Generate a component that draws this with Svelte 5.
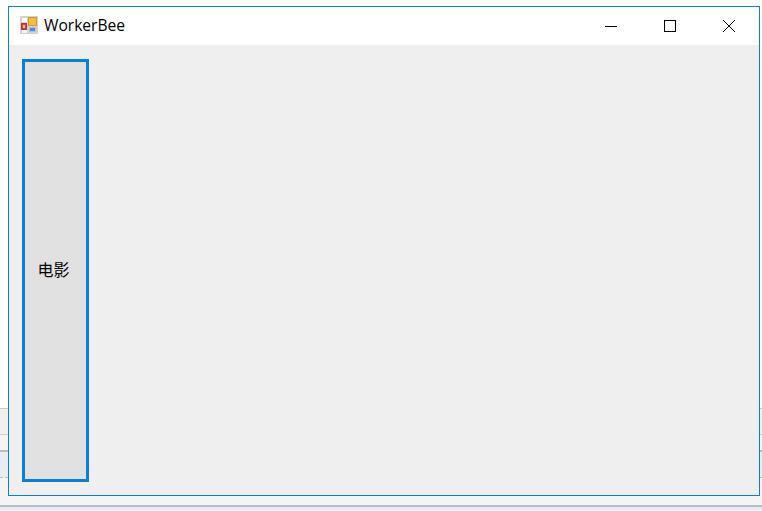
<script>
  const stripes = ['s1', 's2', 's3', 's4', 's5', 's6'];
</script>

<div class="screen">
  <div class="backdrop">
    <div class="gutter">
      {#each stripes as s}
        <div class={s}></div>
      {/each}
    </div>
  </div>
  <div class="window">
    <header class="titlebar">
      <svg class="appicon" width="18" height="18" viewBox="0 0 18 18">
        <rect width="18" height="18" fill="#d2d2d2" />
        <rect x="2" y="2" width="5" height="4" fill="#fff" />
        <rect x="2" y="13" width="5" height="4" fill="#f6f6f6" />
        <rect x="8.5" y="1.5" width="8" height="8" fill="#f5bd3c" stroke="#d59a22" />
        <rect x="1.5" y="7.5" width="5" height="6" fill="#d8423a" stroke="#a83a34" />
        <rect x="3" y="9" width="2" height="3" fill="#efb8a8" />
        <rect x="9.5" y="11.5" width="6" height="4" fill="#4f8ae0" stroke="#a4c2ea" />
      </svg>
      <span class="title">WorkerBee</span>
      <div class="controls">
        <button class="ctl" aria-label="Minimize">
          <svg width="14" height="14" viewBox="0 0 14 14"><path d="M1 7.5H13" stroke="#000" fill="none" /></svg>
        </button>
        <button class="ctl" aria-label="Maximize">
          <svg width="14" height="14" viewBox="0 0 14 14"><rect x="1.5" y="1.5" width="11" height="11" stroke="#000" fill="none" /></svg>
        </button>
        <button class="ctl" aria-label="Close">
          <svg width="14" height="14" viewBox="0 0 14 14"><path d="M1 1L13 13M13 1L1 13" stroke="#000" fill="none" /></svg>
        </button>
      </div>
    </header>
    <main class="client">
      <button class="movie">电影</button>
    </main>
  </div>
</div>

<style>
  :global(body) {
    margin: 0;
    background: #fff;
  }
  .screen {
    position: relative;
    width: 762px;
    height: 511px;
    overflow: hidden;
    font-family: "Liberation Sans", "Noto Sans CJK SC", sans-serif;
  }
  .backdrop {
    height: 100%;
    display: flex;
    flex-direction: column;
    justify-content: flex-end;
    background: #fff;
  }
  .gutter {
    height: 103px;
    display: flex;
    flex-direction: column;
  }
  .gutter > div {
    box-sizing: border-box;
    flex: none;
  }
  .s1 {
    height: 26px;
    background: #f0f0ee;
    border-top: 1px solid #c8c8c8;
  }
  .s2 {
    height: 16px;
    background: #f5f5f5;
    border-top: 1px solid #d0d0d0;
  }
  .s3 {
    height: 27px;
    background: #e6edf7;
    border-top: 2px solid #bcbcbc;
  }
  .s4 {
    height: 28px;
    background: #f4f4f4;
    border-top: 1px dashed #bbb;
  }
  .s5 {
    height: 2px;
    background: #bdbdbd;
  }
  .s6 {
    height: 4px;
    background: #e6edf7;
  }
  .window {
    position: absolute;
    left: 8px;
    top: 6px;
    width: 752px;
    height: 490px;
    box-sizing: border-box;
    border: 1px solid #0a7fd8;
    display: flex;
    flex-direction: column;
    background: #efefef;
  }
  .titlebar {
    height: 38px;
    flex: none;
    background: #fff;
    display: flex;
    align-items: center;
    padding-left: 11px;
  }
  .appicon {
    flex: none;
    margin-top: -2px;
  }
  .title {
    margin-left: 6px;
    margin-top: -2px;
    font-family: "Open Sans", "Noto Sans", sans-serif;
    font-size: 15.6px;
    color: #000;
  }
  .controls {
    margin-left: auto;
    display: flex;
    margin-right: 1px;
  }
  .ctl {
    width: 59px;
    height: 38px;
    padding: 0;
    border: 0;
    background: none;
    display: flex;
    align-items: center;
    justify-content: center;
  }
  .client {
    flex: 1;
    padding: 14px 0 13px 13px;
    display: flex;
  }
  .movie {
    width: 67px;
    box-sizing: border-box;
    border: 3px solid #0a7fd8;
    background: #e1e1e1;
    padding: 0 4px 4px 0;
    font-family: "Noto Sans CJK SC", sans-serif;
    font-size: 16px;
    color: #000;
  }
</style>
